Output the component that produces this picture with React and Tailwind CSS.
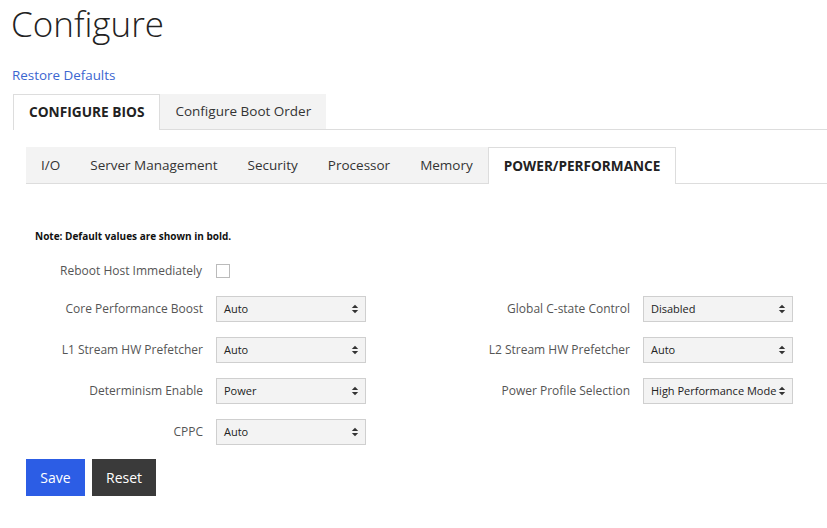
import React from "react";

function Chevrons() {
  return (
    <svg width="8" height="10" viewBox="0 0 8 10" className="shrink-0">
      <path d="M4 0.8 L7.2 4 L0.8 4 Z" fill="#333" />
      <path d="M4 9.2 L7.2 6 L0.8 6 Z" fill="#333" />
    </svg>
  );
}

function Select({ value }) {
  return (
    <div className="w-[150px] h-[26px] bg-[#f3f3f3] border border-[#cfcfcf] flex items-center justify-between pl-[7px] pr-[6px] text-[11px] text-[#222] whitespace-nowrap overflow-hidden">
      <span>{value}</span>
      <Chevrons />
    </div>
  );
}

function Field({ label, value }) {
  return (
    <div className="flex items-center h-[26px]">
      <div className="w-[190px] text-right pr-[13px] text-[12px] text-[#555] whitespace-nowrap">{label}</div>
      <Select value={value} />
    </div>
  );
}

export default function App() {
  const inner = ["I/O", "Server Management", "Security", "Processor", "Memory"];
  return (
    <div className="w-[827px] h-[528px] bg-white overflow-hidden" style={{ fontFamily: '"Open Sans", "Noto Sans", sans-serif' }}>
      <div className="pl-[11px] h-[52px] text-[35px] font-light text-[#222] leading-[48px]">Configure</div>
      <div className="pl-[12px] mt-[14px] text-[13.4px] text-[#3b66d0] leading-[18px]">Restore Defaults</div>
      <div className="flex mt-[10px] h-[36px]">
        <div className="w-[13px] shrink-0" />
        <div className="px-[15px] flex items-center bg-white border border-b-0 border-[#dddddd] text-[13.7px] font-bold text-[#222]">CONFIGURE BIOS</div>
        <div className="px-[15px] flex items-center bg-[#f3f3f3] border-b border-[#dddddd] text-[13.5px] text-[#333]">Configure Boot Order</div>
        <div className="flex-1 border-b border-[#dddddd]" />
      </div>
      <div className="flex ml-[26px] mt-[17px] h-[37px]">
        {inner.map((t) => (
          <div key={t} className="px-[15px] flex items-center bg-[#f3f3f3] border-b border-[#dddddd] text-[13.5px] text-[#333]">{t}</div>
        ))}
        <div className="px-[15px] flex items-center bg-white border border-b-0 border-[#dddddd] text-[13.6px] font-bold text-[#222]">POWER/PERFORMANCE</div>
        <div className="flex-1 border-b border-[#dddddd]" />
      </div>
      <div className="ml-[35px] mt-[46px] text-[10px] font-bold text-[#111] leading-[12px]">Note: Default values are shown in bold.</div>
      <div className="ml-[26px] mt-[21px] flex items-center h-[16px]">
        <div className="w-[190px] text-right pr-[14px] text-[12px] text-[#555] whitespace-nowrap">Reboot Host Immediately</div>
        <div className="w-[14px] h-[14px] border border-[#bbbbbb] bg-white" />
      </div>
      <div className="ml-[26px] mt-[17px] flex flex-col gap-[15px]">
        <div className="flex gap-[87px]">
          <Field label="Core Performance Boost" value="Auto" />
          <Field label="Global C-state Control" value="Disabled" />
        </div>
        <div className="flex gap-[87px]">
          <Field label="L1 Stream HW Prefetcher" value="Auto" />
          <Field label="L2 Stream HW Prefetcher" value="Auto" />
        </div>
        <div className="flex gap-[87px]">
          <Field label="Determinism Enable" value="Power" />
          <Field label="Power Profile Selection" value="High Performance Mode" />
        </div>
        <div className="flex gap-[87px]">
          <Field label="CPPC" value="Auto" />
        </div>
      </div>
      <div className="ml-[26px] mt-[14px] flex gap-[7px]">
        <button className="w-[59px] h-[37px] bg-[#2c5de5] text-white text-[14px]">Save</button>
        <button className="w-[64px] h-[37px] bg-[#3a3a3a] text-white text-[14px]">Reset</button>
      </div>
    </div>
  );
}
